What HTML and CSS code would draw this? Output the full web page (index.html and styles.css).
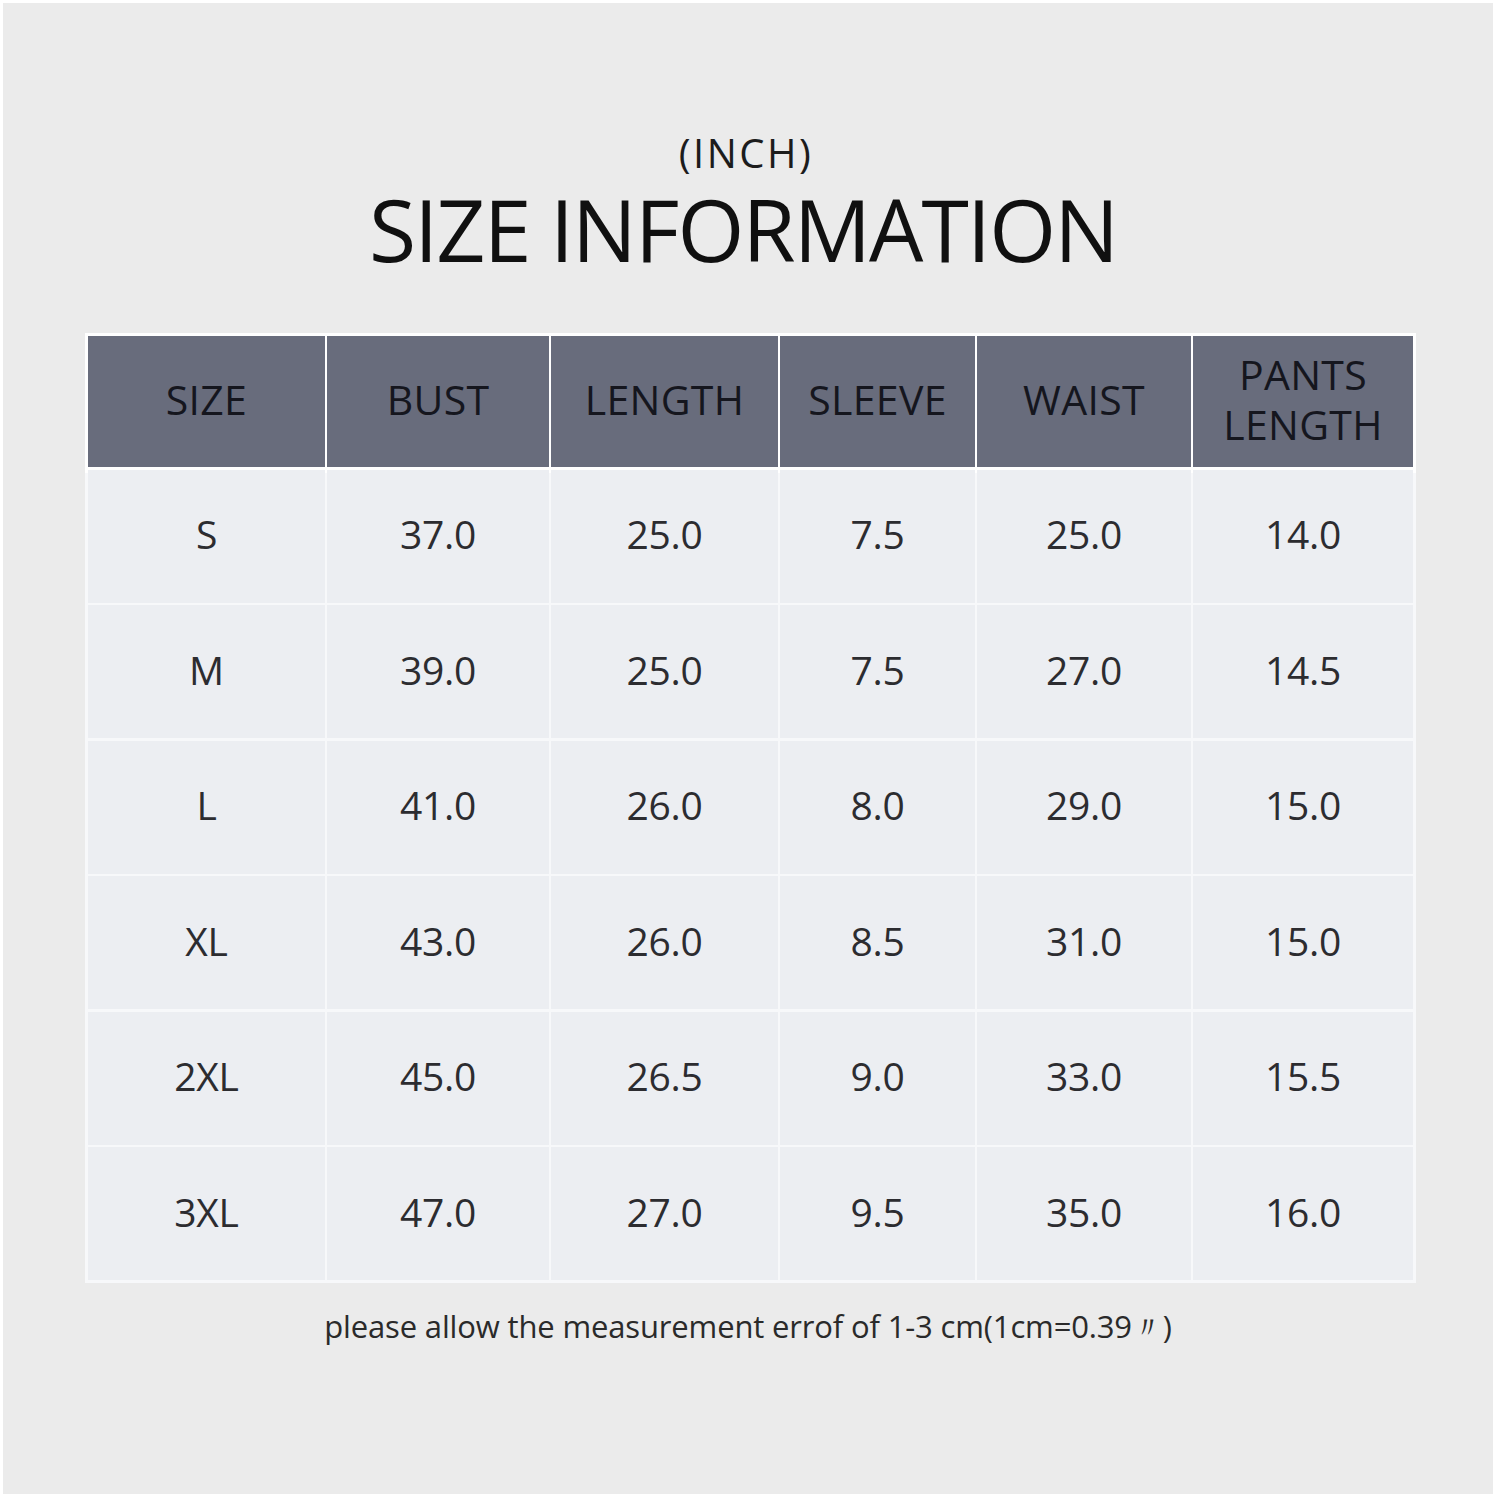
FILE: index.html
```html
<!DOCTYPE html>
<html>
<head>
<meta charset="utf-8">
<link rel="stylesheet" href="styles.css">
</head>
<body>
<div class="frame">
  <div class="unit">(INCH)</div>
  <h1 class="title">SIZE INFORMATION</h1>
  <div class="table">
    <div class="th">SIZE</div><div class="th">BUST</div><div class="th">LENGTH</div><div class="th">SLEEVE</div><div class="th">WAIST</div><div class="th">PANTS<br>LENGTH</div>
    <div class="td">S</div><div class="td">37.0</div><div class="td">25.0</div><div class="td">7.5</div><div class="td">25.0</div><div class="td">14.0</div>
    <div class="td">M</div><div class="td">39.0</div><div class="td">25.0</div><div class="td">7.5</div><div class="td">27.0</div><div class="td">14.5</div>
    <div class="td">L</div><div class="td">41.0</div><div class="td">26.0</div><div class="td">8.0</div><div class="td">29.0</div><div class="td">15.0</div>
    <div class="td">XL</div><div class="td">43.0</div><div class="td">26.0</div><div class="td">8.5</div><div class="td">31.0</div><div class="td">15.0</div>
    <div class="td">2XL</div><div class="td">45.0</div><div class="td">26.5</div><div class="td">9.0</div><div class="td">33.0</div><div class="td">15.5</div>
    <div class="td">3XL</div><div class="td">47.0</div><div class="td">27.0</div><div class="td">9.5</div><div class="td">35.0</div><div class="td">16.0</div>
  </div>
  <p class="note">please allow the measurement errof of 1-3 cm(1cm=0.39〃)</p>
</div>
</body>
</html>
```
FILE: styles.css
```css
html, body {
  margin: 0;
  padding: 0;
  background: #ffffff;
}
body {
  font-family: "Open Sans", "Noto Sans", sans-serif;
}
.frame {
  margin: 3px 6px 0 3px;
  width: 1490px;
  height: 1491px;
  background: #ebebeb;
  box-sizing: border-box;
  padding-top: 128px;
  display: flex;
  flex-direction: column;
  align-items: center;
}
.unit {
  font-size: 40px;
  line-height: 44px;
  color: #1c1c1c;
  letter-spacing: 2.5px;
  margin-left: -4px;
}
.title {
  margin: 9px 0 0 -10px;
  font-weight: 400;
  font-size: 86px;
  line-height: 90px;
  color: #101010;
  letter-spacing: -1.9px;
}
.table {
  align-self: flex-start;
  margin-top: 59px;
  margin-left: 82px;
  display: grid;
  grid-template-columns: 237px 222px 227px 195px 214px 220px;
  grid-template-rows: 131px repeat(6, 133px);
  column-gap: 2px;
  row-gap: 2.5px;
  padding: 3px;
  background: linear-gradient(#ffffff, #ffffff) top / 100% 140px no-repeat, #f7f8fa;
}
.th {
  background: #686c7c;
  color: #15161e;
  font-size: 41px;
  line-height: 50px;
  padding-bottom: 5px;
  display: flex;
  align-items: center;
  justify-content: center;
  text-align: center;
  letter-spacing: 0.3px;
}
.td {
  background: #eceef2;
  color: #2c2c30;
  font-size: 39px;
  padding-bottom: 5px;
  display: flex;
  align-items: center;
  justify-content: center;
  letter-spacing: -0.3px;
}
.note {
  margin: 23px 0 0 0;
  font-size: 31px;
  line-height: 40px;
  color: #2a2a2a;
  letter-spacing: -0.15px;
}
```
